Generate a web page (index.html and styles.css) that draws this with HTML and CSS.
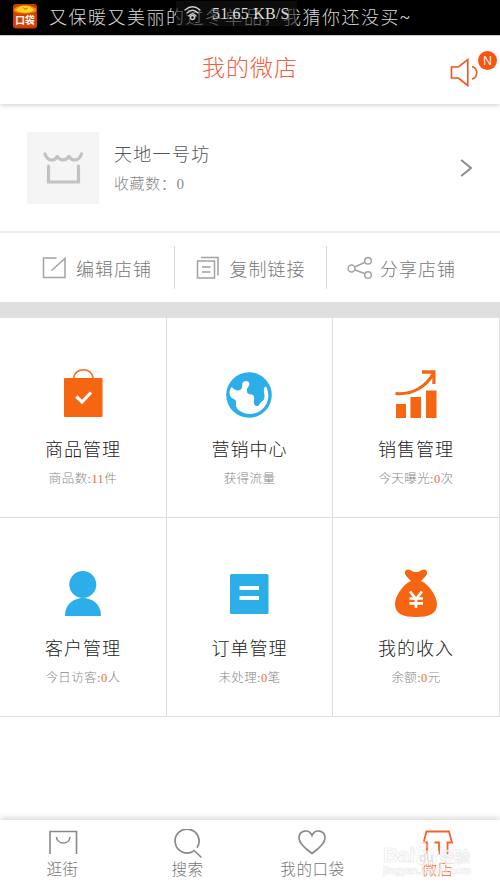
FILE: index.html
```html
<!DOCTYPE html>
<html lang="zh-CN">
<head>
<meta charset="utf-8">
<title>我的微店</title>
<link rel="stylesheet" href="styles.css">
</head>
<body>
<div class="screen">
  <div class="status">
    <svg class="app-logo" width="24" height="25" viewBox="0 0 24 25">
      <rect width="24" height="24.5" rx="3" fill="#c93a04"/>
      <rect x="1.5" y="5" width="21" height="18" rx="2" fill="#d94205"/>
      <path d="M1 7.5C6 10 18 10 23 7.5V5C19 0 5 0 1 5Z" fill="#f58a0b"/>
      <path d="M3 6C7 9.500 17 9.500 21 6C17 .2 7 .2 3 6Z" fill="#ffd91c"/>
      <path d="M10.500 3.500l1 2 1-1.500 1 1.500.7-2" fill="none" stroke="#e66a00"/>
      <text x="2.300" y="19.800" class="logo-text">口袋</text>
    </svg>
    <span class="ticker">又保暖又美丽的过冬单品，我猜你还没买~</span>
    <div class="speed">
      <svg width="17" height="17" viewBox="0 0 17 17" fill="none" stroke="#ccc" stroke-width="1.300" stroke-linecap="round">
        <path d="M1 5Q8.500-1.500 16 5M3 8Q8.500 2.500 14 8M5 11Q8.500 6.500 12 11"/><circle cx="8.500" cy="12.500" r="2"/>
      </svg>
      <span class="speed-value">51.65 KB/S</span>
    </div>
  </div>

  <header class="header">
    <h1 class="title">我的微店</h1>
    <div class="notice">
      <svg width="30" height="30" viewBox="0 0 30 30" fill="none" stroke="#f5541c" stroke-width="1.600">
        <path d="M1.500 9H8.300L17.800 1.700V27.500L8.300 20H1.500Z"/><path d="M22 8.500C28.300 10.500 28.300 18.800 22 21"/>
      </svg>
      <span class="badge">N</span>
    </div>
  </header>

  <section class="shop">
    <div class="avatar">
      <svg width="42" height="34" viewBox="0 0 42 34" fill="none" stroke="#c2c2c2" stroke-width="3.200" stroke-linecap="round" stroke-linejoin="round">
        <path d="M3 3C5.500 10.500 12 10.500 15.500 5.500C18 10 24 10 27 5.500C30.500 10.500 37 10.500 39.500 3"/>
        <path d="M6.500 15V31H36.500V15" stroke-linejoin="miter"/>
      </svg>
    </div>
    <div class="shop-info">
      <div class="shop-name">天地一号坊</div>
      <div class="shop-fav">收藏数：0</div>
    </div>
    <svg class="chevron" width="13" height="18" viewBox="0 0 13 18" fill="none" stroke="#8c8c8c" stroke-width="2"><path d="M1.200 1L11 9L1.200 17"/></svg>
  </section>

  <nav class="actions">
    <a class="action">
      <svg width="24" height="24" viewBox="0 0 24 24" fill="none" stroke="#a3a3a3" stroke-width="1.500"><path d="M14.500 2H1.500V21.500H23V2.500L9.500 14.500"/></svg>
      <span>编辑店铺</span>
    </a>
    <a class="action">
      <svg width="24" height="24" viewBox="0 0 24 24" fill="none" stroke="#a3a3a3" stroke-width="1.500"><path d="M1.500 5H18.500V22H1.500ZM5 1.500H22V19.500M6 11H14.500M6 16H14.500"/></svg>
      <span>复制链接</span>
    </a>
    <a class="action">
      <svg width="26" height="24" viewBox="0 0 26 24" fill="none" stroke="#a3a3a3" stroke-width="1.500"><circle cx="4.500" cy="12.500" r="3.400"/><circle cx="21" cy="4.800" r="3.300"/><circle cx="21" cy="19" r="3.300"/><path d="M7.700 11L18 6.200M7.700 13.700L18 17.700"/></svg>
      <span>分享店铺</span>
    </a>
  </nav>

  <main class="grid">
    <a class="cell">
      <svg class="icon" width="50" height="54" viewBox="0 0 50 54">
        <path d="M15.500 13C17 2 34 2 35.200 13" fill="none" stroke="#f66b1f" stroke-width="1.700"/>
        <rect x="6" y="13" width="38.500" height="39" rx="1" fill="#f66511"/>
        <path d="M18.300 31.500L24 37L33 27.500" fill="none" stroke="#fff" stroke-width="3.200"/>
      </svg>
      <h2>商品管理</h2><p>商品数:<b>11</b>件</p>
    </a>
    <a class="cell">
      <svg class="icon" width="50" height="54" viewBox="0 0 50 54">
        <circle cx="25" cy="30" r="22.800" fill="#2caee9"/>
        <path d="M7.400 22.300C9 22.500 9 24 10.700 24.500C12.500 25.500 14.500 26 15.700 25C19 24 17.500 21 18.500 18C19.500 15.500 25.400 15 25.400 19C25.400 22 22.500 22.500 23 26C23 30.500 28 28.500 29.500 30.500C31.500 33.500 28.500 37 30.700 40C32 42 35 41 35.700 39C37 35.500 40 37 40.500 32C40.500 28 39.500 26 40 23.500C40.500 21.500 42.400 21 43 23.500C46 31 44 41 36 46C30 50 21 50.500 14.500 45C10.500 41 12.500 39 12 36C11 33.500 8 34 7 32C4.500 29 5.500 25 7.400 22.300Z" fill="#fff"/>
      </svg>
      <h2>营销中心</h2><p>获得流量</p>
    </a>
    <a class="cell">
      <svg class="icon" width="50" height="54" viewBox="0 0 50 54" fill="#f66511">
        <path d="M5 39H15V53H5ZM19.500 32H30V53H19.500ZM35 25.500H45.500V53H35Z"/>
        <path d="M4.500 28.500C22 30 36 21 42.500 8" fill="none" stroke="#f66511" stroke-width="3"/>
        <path d="M31 5.300H44.500V19H41.300V8.800H31Z"/>
      </svg>
      <h2>销售管理</h2><p>今天曝光:<b>0</b>次</p>
    </a>
    <a class="cell">
      <svg class="icon" width="50" height="54" viewBox="0 0 50 54" fill="#2caee9">
        <circle cx="24.800" cy="20.500" r="13.500"/><path d="M7 52C6.500 28 43.500 28 43 52Z"/>
      </svg>
      <h2>客户管理</h2><p>今日访客:<b>0</b>人</p>
    </a>
    <a class="cell">
      <svg class="icon" width="50" height="54" viewBox="0 0 50 54">
        <rect x="6" y="10" width="38.500" height="40" rx="1.500" fill="#2caee9"/><path d="M15.500 24H35M15.500 34H35" stroke="#fff" stroke-width="4"/>
      </svg>
      <h2>订单管理</h2><p>未处理:<b>0</b>笔</p>
    </a>
    <a class="cell">
      <svg class="icon" width="50" height="54" viewBox="0 0 50 54">
        <path d="M20 17C17 13.500 14 12 14 8.500C14 5 18 5 20 6.500C23 8.500 27 8.500 30 6.500C32 5 36 5 36 8.500C36 12 33 13.500 30 17C39 21 46 33 46 40C46 50 38 53 25 53C12 53 4 50 4 40C4 33 11 21 20 17Z" fill="#f66511"/>
        <path d="M19 27.500L25 35L31 27.500M25 34V44M18.500 34.500H32M18.500 39.300H32" fill="none" stroke="#fff" stroke-width="2.700"/>
      </svg>
      <h2>我的收入</h2><p>余额:<b>0</b>元</p>
    </a>
  </main>

  <footer class="tabs">
    <a class="tab">
      <svg width="30" height="30" viewBox="0 0 30 30" fill="none" stroke="#898989" stroke-width="1.600"><path d="M2 25V2.500H28.500V25M8.500 8C9 16 21.500 16 22 8"/></svg>
      <span>逛街</span>
    </a>
    <a class="tab">
      <svg width="30" height="30" viewBox="0 0 30 30" fill="none" stroke="#898989" stroke-width="1.700"><path d="M20.500 22.200A12 12 0 1 1 24 18.800M20.500 21L28.500 28.500"/></svg>
      <span>搜索</span>
    </a>
    <a class="tab">
      <svg width="30" height="30" viewBox="0 0 30 30" fill="none" stroke="#898989" stroke-width="1.700"><path d="M14 24.500C7 19.500 1 14.500 1 9C1 1 11 -.5 14 6.500C17 -.5 27 1 27 9C27 14.500 21 19.500 14 24.500Z"/></svg>
      <span>我的口袋</span>
    </a>
    <a class="tab tab-active">
      <svg width="32" height="30" viewBox="0 0 32 30" fill="none" stroke="#f4632a" stroke-width="1.800"><path d="M5 25.500V13.500H1.500L4.500 2.500H27L30 13.500H25.500V25.500M12.500 13.500H17V25.500"/></svg>
      <span>微店</span>
    </a>
    <div class="watermark">
      <svg width="92" height="44" viewBox="0 0 92 44">
        <g fill="#fff" fill-opacity=".6" stroke="#e9e9e9" stroke-width=".7">
          <text x="1" y="26" class="wm-main" textLength="32">Bai</text>
          <ellipse cx="35" cy="16" rx="2.600" ry="3.500"/><ellipse cx="41" cy="10" rx="3" ry="4.500"/><ellipse cx="49" cy="10" rx="3" ry="4.500"/><ellipse cx="54" cy="17" rx="2.600" ry="3.500"/>
          <path d="M45 15C40 15 39 19 36 21C32 26 36 30 45 28C53 30 57 26 53 21C50 19 50 15 45 15Z"/>
          <text x="58" y="26" class="wm-cn">经验</text>
          <text x="1" y="38" class="wm-url" textLength="88">jingyan.baidu.com</text>
        </g>
        <text x="37" y="26" class="wm-du">du</text>
      </svg>
    </div>
  </footer>
</div>
</body>
</html>
```
FILE: styles.css
```css
* { box-sizing: border-box; }
body {
  margin: 0;
  background: #fff;
  font-family: "Liberation Serif", "Noto Sans CJK SC", serif;
  font-weight: 300;
  color: #444;
}
svg { display: block; flex: none; }
h1, h2, p { margin: 0; font-weight: 300; }
.screen { display: flex; flex-direction: column; width: 500px; height: 889px; overflow: hidden; }

.status {
  position: relative;
  display: flex;
  align-items: center;
  height: 35px;
  padding-left: 13px;
  background: #000;
  color: #d8d8d8;
}
.app-logo { margin-top: -3px; }
.logo-text { font: 700 9.700px "Noto Sans CJK SC", sans-serif; fill: #fff; }
.ticker { margin: -3px 0 0 12px; font-size: 18px; letter-spacing: 1.500px; white-space: nowrap; }
.speed {
  position: absolute;
  left: 176px;
  top: 1px;
  display: flex;
  align-items: center;
  width: 121px;
  height: 25px;
  padding-left: 8px;
  background: rgba(20, 20, 20, .6);
}
.speed-value { margin-left: 11px; font-size: 16px; letter-spacing: .2px; color: #ddd; white-space: nowrap; }

.header {
  position: relative;
  display: flex;
  justify-content: center;
  align-items: center;
  height: 69px;
  background: #fff;
  border-top: 1px solid #ccc;
  box-shadow: 0 1px 5px rgba(0, 0, 0, .2);
}
.title { margin-top: -2px; font-size: 23px; line-height: 34px; letter-spacing: 1px; color: #f2603c; }
.notice { position: absolute; left: 450px; top: 22px; }
.badge {
  position: absolute;
  left: 28px;
  top: -7px;
  width: 19px;
  height: 19px;
  border-radius: 50%;
  background: #fa5510;
  color: #fff;
  font: 12px/19px "Open Sans", sans-serif;
  text-align: center;
}

.shop { display: flex; height: 129px; padding: 28px 27px 0 27px; border-bottom: 2px solid #ececec; }
.avatar { display: flex; align-items: center; justify-content: center; width: 72px; height: 72px; background: #f5f5f5; }
.shop-info { flex: 1; padding: 10px 0 0 15px; }
.shop-name { font-size: 18px; line-height: 27px; letter-spacing: 1.300px; color: #555; }
.shop-fav { margin-top: 3px; font-size: 15px; line-height: 24px; letter-spacing: .6px; color: #888; }
.chevron { margin-top: 27px; }

.actions { display: flex; height: 69px; padding: 13px 0; margin-left: 21px; }
.action {
  display: flex;
  flex: none;
  align-items: center;
  width: 152.500px;
  height: 43px;
  gap: 10px;
  padding-left: 21px;
  font-size: 18px;
  letter-spacing: 1px;
  color: #777;
  white-space: nowrap;
}
.action + .action { border-left: 1px solid #dcdcdc; }
.action:last-child { gap: 7px; padding-left: 20px; }

.grid {
  display: grid;
  grid-template-columns: 167px 166px 167px;
  grid-template-rows: 200px 199px;
  border-top: 16px solid #dfdfdf;
}
.cell {
  display: flex;
  flex-direction: column;
  align-items: center;
  padding-top: 47px;
  border-right: 1px solid #dedede;
  border-bottom: 1px solid #dedede;
}
.cell:nth-child(n+4) { padding-top: 46px; }
.cell .icon { margin-left: -1px; }
.cell h2 { margin-top: 18px; font-size: 18px; line-height: 26px; letter-spacing: 1px; color: #222; }
.cell p { margin-top: 6px; font-size: 12.500px; line-height: 20px; letter-spacing: .4px; color: #888; }
.cell b { font-weight: 400; color: #f8683b; }

.tabs {
  position: relative;
  display: flex;
  height: 69px;
  margin-top: auto;
  background: #fff;
  box-shadow: 0 -2px 6px rgba(0, 0, 0, .16);
}
.tab { display: flex; flex: 1; flex-direction: column; align-items: center; padding-top: 9px; font-size: 15.500px; line-height: 22px; letter-spacing: .6px; color: #777; }
.tab-active { color: #f4632a; }
.watermark { position: absolute; left: 382px; top: 16px; }
.wm-main { font: 700 21px "Liberation Sans", sans-serif; }
.wm-cn { font: 700 15px "Noto Sans CJK SC", sans-serif; }
.wm-url { font: 700 10px "Liberation Sans", sans-serif; fill-opacity: .25; stroke-opacity: .8; }
.wm-du { font: 700 12px "Liberation Sans", sans-serif; fill: #e2e2e2; }
```
